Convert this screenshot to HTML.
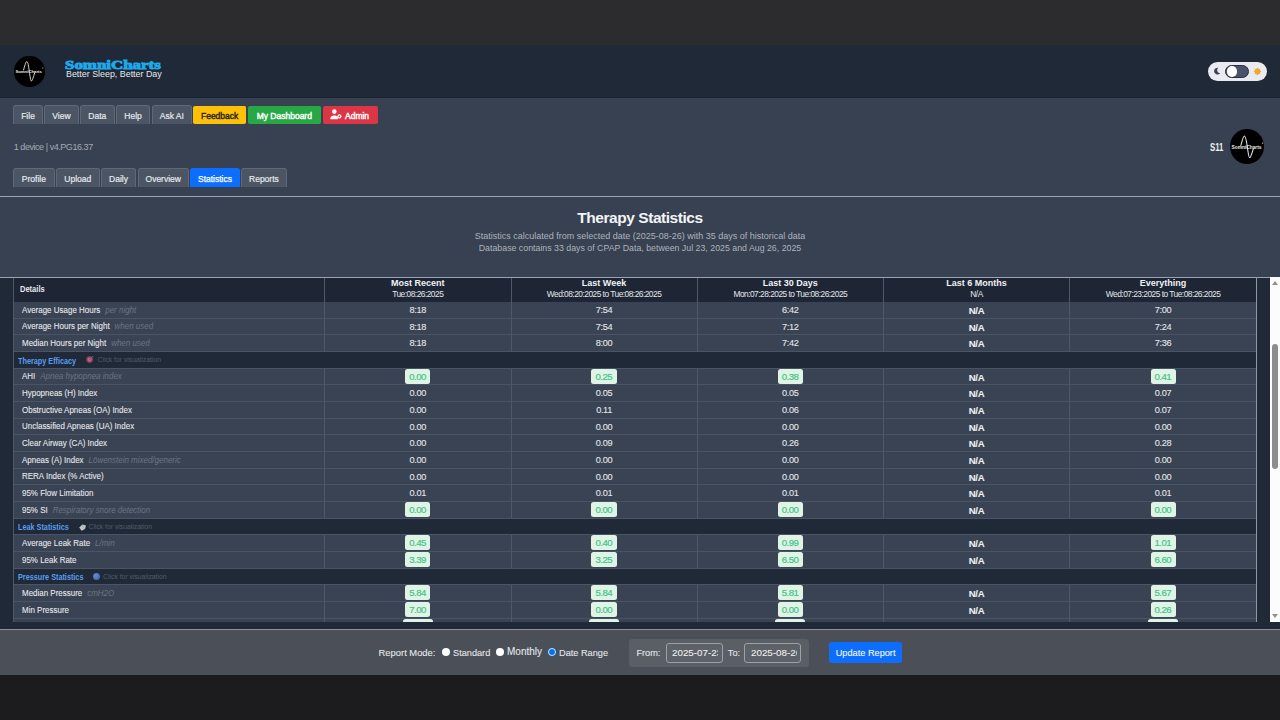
<!DOCTYPE html>
<html><head><meta charset="utf-8"><title>SomniCharts - Statistics</title>
<style>
*{box-sizing:border-box;margin:0;padding:0}
html,body{width:1280px;height:720px;overflow:hidden;background:#2c2c2e;font-family:"Liberation Sans", sans-serif}
.abs{position:absolute}
#top{position:absolute;left:0;top:0;width:1280px;height:44.5px;background:#2c2c2e}
#hdr{position:absolute;left:0;top:44.5px;width:1280px;height:53.1px;background:#1f2937;border-bottom:1px solid #1b2331}
#nav{position:absolute;left:0;top:97.6px;width:1280px;height:98.6px;background:#374151}
#ttl{position:absolute;left:0;top:196px;width:1280px;height:81.5px;background:#374151;border-top:1px solid #9aa3b1}
#tbl{position:absolute;left:0;top:277px;width:1280px;height:353px;background:#1f2937;border-top:1px solid #9aa3b1}
#ftr{position:absolute;left:0;top:629.3px;width:1280px;height:45.4px;background:#4b5058;border-top:1px solid #8b929c}
#bot{position:absolute;left:0;top:674.7px;width:1280px;height:45.3px;background:#1c1c1e}
.btn{position:absolute;top:105px;height:19px;background:#4b5563;border:1px solid #5f6878;border-bottom:none;border-radius:3px 3px 0 0;color:#e6e8ec;font-size:8.5px;line-height:20.6px;text-align:center;white-space:nowrap;-webkit-text-stroke:0.2px #e6e8ec}
.tab{top:168px;height:19px;line-height:21.3px}
.txt{position:absolute;white-space:nowrap}
.row{position:absolute;left:13.5px;width:1243.2px;height:16.667px;background:#3a4354;border-bottom:1px solid #4a5465}
.row.sec{background:#1f2937;border-bottom:1px solid #4a5465}
.c0{position:absolute;left:0;top:0;width:310.9px;height:15.667px;white-space:nowrap}
.lab{position:absolute;left:8.6px;top:2.9px;font-size:8.4px;line-height:10px;color:#e8eaee;-webkit-text-stroke:0.08px #e8eaee;transform-origin:0 0;transform:scaleX(0.952)}
.note{font-style:italic;color:#6c7482;font-size:8.4px;line-height:10px;margin-left:5.2px;-webkit-text-stroke:0}
.cv{position:absolute;top:0;height:15.667px;text-align:center;white-space:nowrap;font-size:9px;line-height:17px}
.vl,.na{display:inline-block;font-size:9.2px;line-height:17px;letter-spacing:-0.35px;color:#e3e6ea;-webkit-text-stroke:0.1px #e3e6ea}
.na{font-weight:bold;font-size:9.6px;letter-spacing:-0.25px;color:#eef0f3}
.bd{display:inline-block;vertical-align:top;margin-top:0.1px;height:15px;padding:0 4.5px 0 4px;background:#e0f4e6;border-radius:2.5px;color:#3fc486;font-size:9.6px;letter-spacing:-0.5px;line-height:16.3px;-webkit-text-stroke:0.2px #3fc486}
.sl{position:absolute;left:4.2px;top:3.8px;font-size:8.5px;line-height:10px;font-weight:bold;color:#5b9cf0;transform-origin:0 0;transform:scaleX(0.855)}
.cfv{position:absolute;top:3.6px;font-size:6.8px;line-height:10px;color:#545c6a}
.ic{position:absolute}
.vl1{position:absolute;top:278px;width:1px;height:23.6px;background:#4e5869}
.vd{position:absolute;top:0;width:1px;height:16.667px;background:#4e5869}
.th{position:absolute;top:277.7px;text-align:center;font-size:9px;line-height:11px;font-weight:bold;color:#f0f2f5;white-space:nowrap}
.td{position:absolute;top:288.9px;text-align:center;font-size:8.4px;letter-spacing:-0.52px;line-height:10px;color:#e3e6ea;white-space:nowrap}
.ft{position:absolute;top:17.8px;font-size:9.2px;line-height:10px;color:#e6e8ec;white-space:nowrap;-webkit-text-stroke:0.08px #e6e8ec}
</style></head>
<body>
<div id="top"></div>
<div id="hdr">
  <div class="abs" style="left:14px;top:11.5px;width:30.5px;height:30.5px;border-radius:50%;background:#000"><svg width="100%" height="100%" viewBox="0 0 30 30" style="position:absolute;left:0;top:0"><path d="M9.3 14.2 C10.5 10 11.5 5.6 12.5 5.6 C13.8 5.6 14.3 10 15.1 15.5 C15.8 20 16.3 24.6 17.1 24.6 C18 24.6 19.3 20 20.4 16.5" fill="none" stroke="#e6e6e6" stroke-width="0.9"/><text x="14.4" y="16.7" font-size="4.3" fill="#ececec" text-anchor="middle" font-family="Liberation Sans" font-weight="bold" textLength="26" lengthAdjust="spacingAndGlyphs">SomniCharts</text><circle cx="28.3" cy="11.8" r="0.6" fill="#ddd"/></svg></div>
  <div class="txt" style="left:65px;top:12.6px;font-family:'Liberation Serif',serif;font-weight:bold;font-size:13px;line-height:16px;color:#1eaaea;-webkit-text-stroke:0.9px #1eaaea;transform-origin:0 0;transform:scaleX(1.3)">SomniCharts</div>
  <div class="txt" style="left:66px;top:24.2px;font-size:8.9px;line-height:10px;color:#e6e8ec">Better Sleep, Better Day</div>
  <div class="abs" style="left:1208px;top:17.2px;width:59px;height:19.3px;border-radius:10px;background:#e9ebf0">
    <svg class="abs" style="left:5.2px;top:5.4px" width="8" height="8" viewBox="0 0 8 8"><path d="M5.4 0.8 A3.4 3.4 0 1 0 7.2 6.2 A3 3 0 0 1 5.4 0.8 Z" fill="#3b4252"/></svg>
    <div class="abs" style="left:17.2px;top:3.3px;width:24px;height:12.8px;border-radius:7px;background:#4a5367;border:1px solid #2b313c"></div>
    <div class="abs" style="left:18.6px;top:4.3px;width:10.8px;height:10.8px;border-radius:50%;background:#fff"></div>
    <svg class="abs" style="left:44.5px;top:5.2px" width="9" height="9" viewBox="0 0 9 9"><g stroke="#f5a623" stroke-width="1"><path d="M4.5 0.9V8.1M0.9 4.5H8.1M1.9 1.9L7.1 7.1M7.1 1.9L1.9 7.1"/></g><circle cx="4.5" cy="4.5" r="2.9" fill="#f5a623"/></svg>
  </div>
</div>
<div id="nav"></div>
<div class="btn" style="left:13.2px;width:29.7px">File</div>
<div class="btn" style="left:43.9px;width:35.1px">View</div>
<div class="btn" style="left:80px;width:34.6px">Data</div>
<div class="btn" style="left:115.8px;width:34.5px">Help</div>
<div class="btn" style="left:151.8px;width:40px">Ask AI</div>
<div class="btn" style="top:106px;height:18px;line-height:19.6px;left:193.3px;width:52.7px;background:#ffc107;border-color:#ffc107;color:#262419;-webkit-text-stroke:0.4px #262419;border-radius:2px">Feedback</div>
<div class="btn" style="top:106px;height:18px;line-height:19.6px;left:248px;width:72.6px;background:#28a745;border-color:#28a745;color:#fff;-webkit-text-stroke:0.4px #fff;border-radius:2px">My Dashboard</div>
<div class="btn" style="top:106px;height:18px;line-height:19.6px;left:322.5px;width:55.2px;background:#dc3545;border-color:#dc3545;color:#fff;-webkit-text-stroke:0.4px #fff;border-radius:2px;text-align:left;padding-left:21.5px">Admin</div>
<svg class="abs" style="left:329px;top:108px" width="14" height="13" viewBox="0 0 14 13"><circle cx="5.3" cy="3.6" r="2.3" fill="#fff"/><path d="M1.2 11.2 C1.2 8.6 2.8 7.4 5.3 7.4 C7 7.4 8.2 7.9 8.8 9 L8.8 11.2 Z" fill="#fff"/><circle cx="10.4" cy="8.4" r="2.1" fill="#fff"/><circle cx="10.4" cy="8.4" r="0.8" fill="#dc3545"/></svg>
<div class="txt" style="left:13.75px;top:141.6px;font-size:9px;line-height:10px;letter-spacing:-0.45px;color:#a3aab5">1 device | v4.PG16.37</div>
<div class="txt" style="left:1210.3px;top:142.2px;font-size:10.2px;line-height:11px;font-weight:bold;color:#eef0f3;transform-origin:0 0;transform:scaleX(0.76)">S11</div>
<div class="abs" style="left:1229.8px;top:128.9px;width:34.5px;height:35.5px;border-radius:50%;background:#000"><svg width="100%" height="100%" viewBox="0 0 30 30" style="position:absolute;left:0;top:0"><path d="M9.3 14.2 C10.5 10 11.5 5.6 12.5 5.6 C13.8 5.6 14.3 10 15.1 15.5 C15.8 20 16.3 24.6 17.1 24.6 C18 24.6 19.3 20 20.4 16.5" fill="none" stroke="#e6e6e6" stroke-width="0.9"/><text x="14.4" y="16.7" font-size="4.3" fill="#ececec" text-anchor="middle" font-family="Liberation Sans" font-weight="bold" textLength="26" lengthAdjust="spacingAndGlyphs">SomniCharts</text><circle cx="28.3" cy="11.8" r="0.6" fill="#ddd"/></svg></div>
<div class="btn tab" style="left:13.2px;width:41.4px">Profile</div>
<div class="btn tab" style="left:56px;width:43.5px">Upload</div>
<div class="btn tab" style="left:101px;width:35px">Daily</div>
<div class="btn tab" style="left:137.5px;width:51.5px">Overview</div>
<div class="btn tab" style="left:190px;width:50px;background:#0d6efd;border-color:#0d6efd;color:#fff;-webkit-text-stroke:0.25px #fff">Statistics</div>
<div class="btn tab" style="left:241px;width:45.8px">Reports</div>
<div id="ttl">
  <div class="txt" style="left:0;width:1280px;text-align:center;top:12.4px;font-size:15.5px;line-height:18px;font-weight:bold;color:#f3f4f6;letter-spacing:-0.45px">Therapy Statistics</div>
  <div class="txt" style="left:0;width:1280px;text-align:center;top:33.9px;font-size:9px;line-height:11px;color:#adb3bd">Statistics calculated from selected date (2025-08-26) with 35 days of historical data</div>
  <div class="txt" style="left:0;width:1280px;text-align:center;top:45.6px;font-size:8.8px;line-height:11px;color:#adb3bd">Database contains 33 days of CPAP Data, between Jul 23, 2025 and Aug 26, 2025</div>
</div>
<div id="tbl"></div>
<div class="abs" style="left:0;top:277.5px;width:1280px;height:344.5px;overflow:hidden">
<div class="abs" style="left:0;top:-277.5px;width:1280px;height:720px">
<div class="abs" style="left:13.5px;top:277.5px;width:1243.2px;height:24.4px;background:#1e2635"></div>
<div class="txt" style="left:19.7px;top:283.6px;font-size:8.6px;line-height:10px;font-weight:bold;color:#e8eaee;transform-origin:0 0;transform:scaleX(0.875)">Details</div>
<div class="vl1" style="left:323.90px"></div><div class="th" style="left:324.40px;width:186.70px">Most Recent</div><div class="td" style="left:324.40px;width:186.70px">Tue:08:26:2025</div><div class="vl1" style="left:510.60px"></div><div class="th" style="left:511.10px;width:185.90px">Last Week</div><div class="td" style="left:511.10px;width:185.90px">Wed:08:20:2025 to Tue:08:26:2025</div><div class="vl1" style="left:696.50px"></div><div class="th" style="left:697.00px;width:186.60px">Last 30 Days</div><div class="td" style="left:697.00px;width:186.60px">Mon:07:28:2025 to Tue:08:26:2025</div><div class="vl1" style="left:883.10px"></div><div class="th" style="left:883.60px;width:185.90px">Last 6 Months</div><div class="td" style="left:883.60px;width:185.90px">N/A</div><div class="vl1" style="left:1069.00px"></div><div class="th" style="left:1069.50px;width:187.20px">Everything</div><div class="td" style="left:1069.50px;width:187.20px">Wed:07:23:2025 to Tue:08:26:2025</div>
<div class="row" style="top:301.900px"><div class="c0"><span class="lab">Average Usage Hours<span class="note">per night</span></span></div><div class="vd" style="left:310.40px"></div><div class="cv" style="left:310.90px;width:186.70px"><span class="vl">8:18</span></div><div class="vd" style="left:497.10px"></div><div class="cv" style="left:497.60px;width:185.90px"><span class="vl">7:54</span></div><div class="vd" style="left:683.00px"></div><div class="cv" style="left:683.50px;width:186.60px"><span class="vl">6:42</span></div><div class="vd" style="left:869.60px"></div><div class="cv" style="left:870.10px;width:185.90px"><span class="na">N/A</span></div><div class="vd" style="left:1055.50px"></div><div class="cv" style="left:1056.00px;width:187.20px"><span class="vl">7:00</span></div></div>
<div class="row" style="top:318.567px"><div class="c0"><span class="lab">Average Hours per Night<span class="note">when used</span></span></div><div class="vd" style="left:310.40px"></div><div class="cv" style="left:310.90px;width:186.70px"><span class="vl">8:18</span></div><div class="vd" style="left:497.10px"></div><div class="cv" style="left:497.60px;width:185.90px"><span class="vl">7:54</span></div><div class="vd" style="left:683.00px"></div><div class="cv" style="left:683.50px;width:186.60px"><span class="vl">7:12</span></div><div class="vd" style="left:869.60px"></div><div class="cv" style="left:870.10px;width:185.90px"><span class="na">N/A</span></div><div class="vd" style="left:1055.50px"></div><div class="cv" style="left:1056.00px;width:187.20px"><span class="vl">7:24</span></div></div>
<div class="row" style="top:335.234px"><div class="c0"><span class="lab">Median Hours per Night<span class="note">when used</span></span></div><div class="vd" style="left:310.40px"></div><div class="cv" style="left:310.90px;width:186.70px"><span class="vl">8:18</span></div><div class="vd" style="left:497.10px"></div><div class="cv" style="left:497.60px;width:185.90px"><span class="vl">8:00</span></div><div class="vd" style="left:683.00px"></div><div class="cv" style="left:683.50px;width:186.60px"><span class="vl">7:42</span></div><div class="vd" style="left:869.60px"></div><div class="cv" style="left:870.10px;width:185.90px"><span class="na">N/A</span></div><div class="vd" style="left:1055.50px"></div><div class="cv" style="left:1056.00px;width:187.20px"><span class="vl">7:36</span></div></div>
<div class="row sec" style="top:351.901px"><span class="sl">Therapy Efficacy</span><svg class="ic" style="left:71.7px;top:2.6px;opacity:.7" width="10" height="10" viewBox="0 0 10 10"><circle cx="4.6" cy="5.6" r="3.3" fill="#d8457a"/><circle cx="4.6" cy="5.6" r="1.8" fill="#f3a7c0"/><circle cx="4.6" cy="5.6" r="0.9" fill="#d8457a"/><path d="M4.8 5.4 L8 2.2" stroke="#5aa0d8" stroke-width="1"/></svg><span class="cfv" style="left:84px">Click for visualization</span></div>
<div class="row" style="top:368.568px"><div class="c0"><span class="lab">AHI<span class="note">Apnea hypopnea index</span></span></div><div class="vd" style="left:310.40px"></div><div class="cv" style="left:310.90px;width:186.70px"><span class="bd">0.00</span></div><div class="vd" style="left:497.10px"></div><div class="cv" style="left:497.60px;width:185.90px"><span class="bd">0.25</span></div><div class="vd" style="left:683.00px"></div><div class="cv" style="left:683.50px;width:186.60px"><span class="bd">0.38</span></div><div class="vd" style="left:869.60px"></div><div class="cv" style="left:870.10px;width:185.90px"><span class="na">N/A</span></div><div class="vd" style="left:1055.50px"></div><div class="cv" style="left:1056.00px;width:187.20px"><span class="bd">0.41</span></div></div>
<div class="row" style="top:385.235px"><div class="c0"><span class="lab">Hypopneas (H) Index</span></div><div class="vd" style="left:310.40px"></div><div class="cv" style="left:310.90px;width:186.70px"><span class="vl">0.00</span></div><div class="vd" style="left:497.10px"></div><div class="cv" style="left:497.60px;width:185.90px"><span class="vl">0.05</span></div><div class="vd" style="left:683.00px"></div><div class="cv" style="left:683.50px;width:186.60px"><span class="vl">0.05</span></div><div class="vd" style="left:869.60px"></div><div class="cv" style="left:870.10px;width:185.90px"><span class="na">N/A</span></div><div class="vd" style="left:1055.50px"></div><div class="cv" style="left:1056.00px;width:187.20px"><span class="vl">0.07</span></div></div>
<div class="row" style="top:401.902px"><div class="c0"><span class="lab">Obstructive Apneas (OA) Index</span></div><div class="vd" style="left:310.40px"></div><div class="cv" style="left:310.90px;width:186.70px"><span class="vl">0.00</span></div><div class="vd" style="left:497.10px"></div><div class="cv" style="left:497.60px;width:185.90px"><span class="vl">0.11</span></div><div class="vd" style="left:683.00px"></div><div class="cv" style="left:683.50px;width:186.60px"><span class="vl">0.06</span></div><div class="vd" style="left:869.60px"></div><div class="cv" style="left:870.10px;width:185.90px"><span class="na">N/A</span></div><div class="vd" style="left:1055.50px"></div><div class="cv" style="left:1056.00px;width:187.20px"><span class="vl">0.07</span></div></div>
<div class="row" style="top:418.569px"><div class="c0"><span class="lab">Unclassified Apneas (UA) Index</span></div><div class="vd" style="left:310.40px"></div><div class="cv" style="left:310.90px;width:186.70px"><span class="vl">0.00</span></div><div class="vd" style="left:497.10px"></div><div class="cv" style="left:497.60px;width:185.90px"><span class="vl">0.00</span></div><div class="vd" style="left:683.00px"></div><div class="cv" style="left:683.50px;width:186.60px"><span class="vl">0.00</span></div><div class="vd" style="left:869.60px"></div><div class="cv" style="left:870.10px;width:185.90px"><span class="na">N/A</span></div><div class="vd" style="left:1055.50px"></div><div class="cv" style="left:1056.00px;width:187.20px"><span class="vl">0.00</span></div></div>
<div class="row" style="top:435.236px"><div class="c0"><span class="lab">Clear Airway (CA) Index</span></div><div class="vd" style="left:310.40px"></div><div class="cv" style="left:310.90px;width:186.70px"><span class="vl">0.00</span></div><div class="vd" style="left:497.10px"></div><div class="cv" style="left:497.60px;width:185.90px"><span class="vl">0.09</span></div><div class="vd" style="left:683.00px"></div><div class="cv" style="left:683.50px;width:186.60px"><span class="vl">0.26</span></div><div class="vd" style="left:869.60px"></div><div class="cv" style="left:870.10px;width:185.90px"><span class="na">N/A</span></div><div class="vd" style="left:1055.50px"></div><div class="cv" style="left:1056.00px;width:187.20px"><span class="vl">0.28</span></div></div>
<div class="row" style="top:451.903px"><div class="c0"><span class="lab">Apneas (A) Index<span class="note">L&ouml;wenstein mixed/generic</span></span></div><div class="vd" style="left:310.40px"></div><div class="cv" style="left:310.90px;width:186.70px"><span class="vl">0.00</span></div><div class="vd" style="left:497.10px"></div><div class="cv" style="left:497.60px;width:185.90px"><span class="vl">0.00</span></div><div class="vd" style="left:683.00px"></div><div class="cv" style="left:683.50px;width:186.60px"><span class="vl">0.00</span></div><div class="vd" style="left:869.60px"></div><div class="cv" style="left:870.10px;width:185.90px"><span class="na">N/A</span></div><div class="vd" style="left:1055.50px"></div><div class="cv" style="left:1056.00px;width:187.20px"><span class="vl">0.00</span></div></div>
<div class="row" style="top:468.570px"><div class="c0"><span class="lab">RERA Index (% Active)</span></div><div class="vd" style="left:310.40px"></div><div class="cv" style="left:310.90px;width:186.70px"><span class="vl">0.00</span></div><div class="vd" style="left:497.10px"></div><div class="cv" style="left:497.60px;width:185.90px"><span class="vl">0.00</span></div><div class="vd" style="left:683.00px"></div><div class="cv" style="left:683.50px;width:186.60px"><span class="vl">0.00</span></div><div class="vd" style="left:869.60px"></div><div class="cv" style="left:870.10px;width:185.90px"><span class="na">N/A</span></div><div class="vd" style="left:1055.50px"></div><div class="cv" style="left:1056.00px;width:187.20px"><span class="vl">0.00</span></div></div>
<div class="row" style="top:485.237px"><div class="c0"><span class="lab">95% Flow Limitation</span></div><div class="vd" style="left:310.40px"></div><div class="cv" style="left:310.90px;width:186.70px"><span class="vl">0.01</span></div><div class="vd" style="left:497.10px"></div><div class="cv" style="left:497.60px;width:185.90px"><span class="vl">0.01</span></div><div class="vd" style="left:683.00px"></div><div class="cv" style="left:683.50px;width:186.60px"><span class="vl">0.01</span></div><div class="vd" style="left:869.60px"></div><div class="cv" style="left:870.10px;width:185.90px"><span class="na">N/A</span></div><div class="vd" style="left:1055.50px"></div><div class="cv" style="left:1056.00px;width:187.20px"><span class="vl">0.01</span></div></div>
<div class="row" style="top:501.904px"><div class="c0"><span class="lab">95% SI<span class="note">Respiratory snore detection</span></span></div><div class="vd" style="left:310.40px"></div><div class="cv" style="left:310.90px;width:186.70px"><span class="bd">0.00</span></div><div class="vd" style="left:497.10px"></div><div class="cv" style="left:497.60px;width:185.90px"><span class="bd">0.00</span></div><div class="vd" style="left:683.00px"></div><div class="cv" style="left:683.50px;width:186.60px"><span class="bd">0.00</span></div><div class="vd" style="left:869.60px"></div><div class="cv" style="left:870.10px;width:185.90px"><span class="na">N/A</span></div><div class="vd" style="left:1055.50px"></div><div class="cv" style="left:1056.00px;width:187.20px"><span class="bd">0.00</span></div></div>
<div class="row sec" style="top:518.571px"><span class="sl">Leak Statistics</span><svg class="ic" style="left:64px;top:4px;opacity:.85" width="9" height="9" viewBox="0 0 9 9"><path d="M1.2 4.6 L4.4 1.4 L8 2.4 L7 6 L3.6 7.8 Z" fill="#dfe2e8"/><path d="M4.4 1.4 L5.2 4.4 L7 6" stroke="#9aa1ad" stroke-width="0.5" fill="none"/></svg><span class="cfv" style="left:75px">Click for visualization</span></div>
<div class="row" style="top:535.238px"><div class="c0"><span class="lab">Average Leak Rate<span class="note">L/min</span></span></div><div class="vd" style="left:310.40px"></div><div class="cv" style="left:310.90px;width:186.70px"><span class="bd">0.45</span></div><div class="vd" style="left:497.10px"></div><div class="cv" style="left:497.60px;width:185.90px"><span class="bd">0.40</span></div><div class="vd" style="left:683.00px"></div><div class="cv" style="left:683.50px;width:186.60px"><span class="bd">0.99</span></div><div class="vd" style="left:869.60px"></div><div class="cv" style="left:870.10px;width:185.90px"><span class="na">N/A</span></div><div class="vd" style="left:1055.50px"></div><div class="cv" style="left:1056.00px;width:187.20px"><span class="bd">1.01</span></div></div>
<div class="row" style="top:551.905px"><div class="c0"><span class="lab">95% Leak Rate</span></div><div class="vd" style="left:310.40px"></div><div class="cv" style="left:310.90px;width:186.70px"><span class="bd">3.39</span></div><div class="vd" style="left:497.10px"></div><div class="cv" style="left:497.60px;width:185.90px"><span class="bd">3.25</span></div><div class="vd" style="left:683.00px"></div><div class="cv" style="left:683.50px;width:186.60px"><span class="bd">6.50</span></div><div class="vd" style="left:869.60px"></div><div class="cv" style="left:870.10px;width:185.90px"><span class="na">N/A</span></div><div class="vd" style="left:1055.50px"></div><div class="cv" style="left:1056.00px;width:187.20px"><span class="bd">6.60</span></div></div>
<div class="row sec" style="top:568.572px"><span class="sl">Pressure Statistics</span><span class="ic" style="left:79px;top:4.2px;width:7.2px;height:7.2px;border-radius:50%;opacity:.8;background:radial-gradient(circle at 38% 38%,#7ea4ea,#3e68c8)"></span><span class="cfv" style="left:89.6px">Click for visualization</span></div>
<div class="row" style="top:585.239px"><div class="c0"><span class="lab">Median Pressure<span class="note">cmH2O</span></span></div><div class="vd" style="left:310.40px"></div><div class="cv" style="left:310.90px;width:186.70px"><span class="bd">5.84</span></div><div class="vd" style="left:497.10px"></div><div class="cv" style="left:497.60px;width:185.90px"><span class="bd">5.84</span></div><div class="vd" style="left:683.00px"></div><div class="cv" style="left:683.50px;width:186.60px"><span class="bd">5.81</span></div><div class="vd" style="left:869.60px"></div><div class="cv" style="left:870.10px;width:185.90px"><span class="na">N/A</span></div><div class="vd" style="left:1055.50px"></div><div class="cv" style="left:1056.00px;width:187.20px"><span class="bd">5.67</span></div></div>
<div class="row" style="top:601.906px"><div class="c0"><span class="lab">Min Pressure</span></div><div class="vd" style="left:310.40px"></div><div class="cv" style="left:310.90px;width:186.70px"><span class="bd">7.00</span></div><div class="vd" style="left:497.10px"></div><div class="cv" style="left:497.60px;width:185.90px"><span class="bd">0.00</span></div><div class="vd" style="left:683.00px"></div><div class="cv" style="left:683.50px;width:186.60px"><span class="bd">0.00</span></div><div class="vd" style="left:869.60px"></div><div class="cv" style="left:870.10px;width:185.90px"><span class="na">N/A</span></div><div class="vd" style="left:1055.50px"></div><div class="cv" style="left:1056.00px;width:187.20px"><span class="bd">0.26</span></div></div>
<div class="row" style="top:618.573px"><div class="c0"><span class="lab">Max Pressure</span></div><div class="vd" style="left:310.40px"></div><div class="cv" style="left:310.90px;width:186.70px"><span class="bd">10.00</span></div><div class="vd" style="left:497.10px"></div><div class="cv" style="left:497.60px;width:185.90px"><span class="bd">10.00</span></div><div class="vd" style="left:683.00px"></div><div class="cv" style="left:683.50px;width:186.60px"><span class="bd">10.00</span></div><div class="vd" style="left:869.60px"></div><div class="cv" style="left:870.10px;width:185.90px"><span class="na">N/A</span></div><div class="vd" style="left:1055.50px"></div><div class="cv" style="left:1056.00px;width:187.20px"><span class="bd">10.00</span></div></div>
<div class="abs" style="left:13px;top:278px;width:1.2px;height:344px;background:#4d5768"></div>
<div class="abs" style="left:1256.2px;top:278px;width:1px;height:344px;background:#8e96a3"></div>
</div></div>
<div class="abs" style="left:1269.8px;top:277px;width:10.2px;height:344.5px;background:#fcfcfc">
  <div class="abs" style="left:2.2px;top:67px;width:5.8px;height:125px;border-radius:3px;background:#8d8d8d"></div>
  <div class="abs" style="left:2.1px;top:3.6px;width:0;height:0;border-left:3.1px solid transparent;border-right:3.1px solid transparent;border-bottom:4.6px solid #8f8f8f"></div>
  <div class="abs" style="left:2.1px;top:337.3px;width:0;height:0;border-left:3.1px solid transparent;border-right:3.1px solid transparent;border-top:4.6px solid #8f8f8f"></div>
</div>
<div id="ftr">
  <div class="ft" style="left:378.6px;font-size:9.4px">Report Mode:</div>
  <div class="abs" style="left:441.6px;top:17.9px;width:8.2px;height:8.2px;border-radius:50%;background:#fff"></div>
  <div class="ft" style="left:453px">Standard</div>
  <div class="abs" style="left:496px;top:17.9px;width:8.2px;height:8.2px;border-radius:50%;background:#fff"></div>
  <div class="ft" style="left:507px;font-size:10px;top:17.2px">Monthly</div>
  <div class="abs" style="left:548px;top:17.4px;width:8.4px;height:8.4px;border-radius:50%;background:#0b6fe0;border:1.3px solid #cfe8ff;box-shadow:0 0 0 0.7px #1f5fae"></div>
  <div class="ft" style="left:559px">Date Range</div>
  <div class="abs" style="left:628.7px;top:8.6px;width:180.7px;height:28.1px;border-radius:3.5px;background:#5a5e65"></div>
  <div class="ft" style="left:636.4px">From:</div>
  <div class="abs" style="left:666.2px;top:13.1px;width:56.4px;height:19.6px;border-radius:3px;background:#5d6168;border:1px solid #9ba1a9"><div class="abs" style="left:4.8px;top:0;width:45.6px;height:17.6px;overflow:hidden"><div class="ft" style="left:0;top:3.6px;font-size:9.8px;color:#f2f3f5">2025-07-23</div></div></div>
  <div class="ft" style="left:727.8px">To:</div>
  <div class="abs" style="left:744.4px;top:13.1px;width:57px;height:19.6px;border-radius:3px;background:#5d6168;border:1px solid #9ba1a9"><div class="abs" style="left:5.6px;top:0;width:45.8px;height:17.6px;overflow:hidden"><div class="ft" style="left:0;top:3.6px;font-size:9.8px;color:#f2f3f5">2025-08-26</div></div></div>
  <div class="abs" style="left:829.3px;top:11.9px;width:72.6px;height:21.1px;border-radius:3px;background:#0d6efd"></div>
  <div class="ft" style="left:829.3px;width:72.6px;text-align:center;color:#fff">Update Report</div>
</div>
<div id="bot"></div>
</body></html>
